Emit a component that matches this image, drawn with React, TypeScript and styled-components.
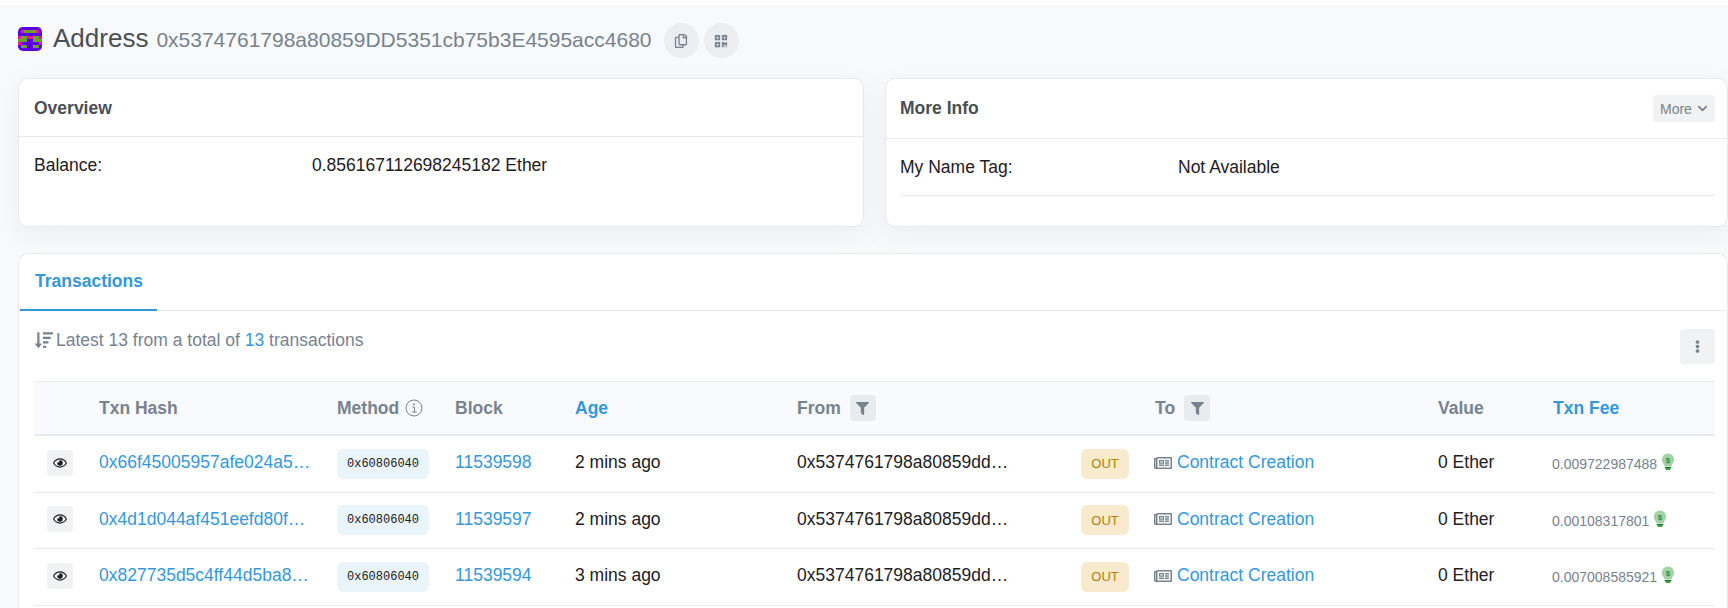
import styled, { createGlobalStyle } from "styled-components";
import {
    FaChevronDown,
    FaEllipsisV,
    FaFilter,
    FaQrcode,
    FaRegCopy,
    FaRegEye,
    FaRegNewspaper,
    FaSortAmountDown,
} from "react-icons/fa";

const grayText = "#77838f";
const darkText = "#1e2022";
const titleText = "#4a4f55";
const highlight = "#3498db";
const border = "#e7eaf3";
const softButton = "#f1f2f4";

const GlobalStyle = createGlobalStyle`
    html, body {
        margin: 0;
        height: 608px;
        overflow: hidden;
        background: #f8f9fa;
        font-family: "Liberation Sans", Arial, sans-serif;
        font-size: 17.5px;
        color: ${darkText};
    }
`;

const Page = styled.div`
    width: 1728px;
    height: 608px;
    overflow: hidden;
    box-sizing: border-box;
    border-top: 5px solid #fdfdfe;
    padding: 0 0 0 18px;
`;

const Header = styled.header`
    display: flex;
    align-items: center;
    box-sizing: border-box;
    height: 63px;
    padding-top: 4px;
    margin-bottom: 10px;
`;

const PageTitle = styled.h1`
    margin: 0 0 0 11px;
    font-size: 26px;
    font-weight: 400;
    color: ${titleText};
`;

const AddressHash = styled.span`
    margin-left: 8px;
    margin-top: 2px;
    font-size: 21px;
    color: ${grayText};
`;

const RoundButton = styled.button<{ $first?: boolean }>`
    display: flex;
    align-items: center;
    justify-content: center;
    width: 35px;
    height: 35px;
    padding: 0;
    margin-top: 4px;
    margin-left: ${(props) => (props.$first ? "12px" : "5px")};
    border: none;
    border-radius: 50%;
    background: #eceef1;
    color: ${grayText};
    font-size: 14px;
`;

const TopGrid = styled.div`
    display: grid;
    grid-template-columns: 846px 843px;
    column-gap: 21px;
    width: 1710px;
`;

const Card = styled.section`
    box-sizing: border-box;
    height: 149px;
    background: #fff;
    border: 1px solid ${border};
    border-radius: 10px;
    box-shadow: 0 8px 24px rgba(140, 152, 164, 0.1);
`;

const CardHeader = styled.div<{ $tall?: boolean }>`
    display: flex;
    align-items: center;
    justify-content: space-between;
    box-sizing: border-box;
    height: ${(props) => (props.$tall ? "60px" : "58px")};
    padding: ${(props) => (props.$tall ? "0 12px 0 14px" : "2px 12px 0 15px")};
    border-bottom: 1px solid ${border};
`;

const CardTitle = styled.h2`
    margin: 0;
    font-size: 17.5px;
    font-weight: 700;
    color: ${titleText};
`;

const MoreButton = styled.button`
    display: flex;
    align-items: center;
    gap: 5px;
    height: 27px;
    width: 62px;
    box-sizing: border-box;
    padding: 0 7px;
    border: none;
    border-radius: 4px;
    background: #f1f2f4;
    color: ${grayText};
    font-family: inherit;
    font-size: 14px;

    svg {
        font-size: 11px;
    }
`;

const InfoRow = styled.div<{ $labelWidth: number; $lined?: boolean }>`
    display: grid;
    grid-template-columns: ${(props) => props.$labelWidth}px 1fr;
    align-items: center;
    margin: ${(props) => (props.$lined ? "0 12px 0 14px" : "0 12px 0 15px")};
    padding: ${(props) => (props.$lined ? "15px 0 15px" : "15px 0")};
    line-height: 26px;
    border-bottom: ${(props) => (props.$lined ? `1px solid ${border}` : "none")};
`;

const TxnCard = styled.section`
    box-sizing: border-box;
    height: 400px;
    margin-top: 26px;
    width: 1710px;
    background: #fff;
    border: 1px solid ${border};
    border-bottom: none;
    border-radius: 10px 10px 0 0;
`;

const Tabs = styled.div`
    height: 57px;
    box-sizing: border-box;
    border-bottom: 1px solid ${border};
    padding-left: 1px;
`;

const Tab = styled.div`
    box-sizing: border-box;
    width: 137px;
    height: 57px;
    padding: 14px 0 0 15px;
    font-weight: 700;
    line-height: 26px;
    color: ${highlight};
    border-bottom: 2px solid ${highlight};
`;

const TxnBody = styled.div`
    padding: 0 12px 0 16px;
`;

const Toolbar = styled.div`
    display: flex;
    justify-content: space-between;
    height: 70px;
    padding-top: 18px;
    box-sizing: border-box;
`;

const Summary = styled.div`
    display: flex;
    align-items: flex-start;
    gap: 3px;
    height: 22px;
    line-height: 22px;
    color: ${grayText};

    svg {
        font-size: 18px;
        margin-top: 2px;
    }
`;

const SummaryLink = styled.span`
    color: ${highlight};
`;

const KebabButton = styled.button`
    display: flex;
    align-items: center;
    justify-content: center;
    width: 35px;
    height: 35px;
    padding: 0;
    border: none;
    border-radius: 4px;
    background: ${softButton};
    color: ${grayText};
    font-size: 13px;
`;

const columns = "64px 238px 118px 120px 222px 284px 74px 283px 115px 161px";

const HeadRow = styled.div`
    display: grid;
    grid-template-columns: ${columns};
    align-items: center;
    box-sizing: border-box;
    height: 55px;
    background: #f8fafd;
    border-top: 1px solid ${border};
    border-bottom: 2px solid ${border};
`;

const HeadCell = styled.div<{ $sorted?: boolean; $wide?: boolean }>`
    display: flex;
    align-items: center;
    gap: ${(props) => (props.$wide ? "9px" : "6px")};
    font-weight: 700;
    color: ${(props) => (props.$sorted ? highlight : grayText)};
`;

const FilterButton = styled.span`
    display: flex;
    align-items: center;
    justify-content: center;
    width: 26px;
    height: 26px;
    border-radius: 4px;
    background: #e9ecef;
    color: ${grayText};
    font-size: 13px;
`;

const Row = styled.div`
    display: grid;
    grid-template-columns: ${columns};
    align-items: center;
    box-sizing: border-box;
    height: 56.5px;
    border-bottom: 1px solid ${border};
`;

const EyeButton = styled.button`
    display: flex;
    align-items: center;
    justify-content: center;
    width: 26px;
    height: 26px;
    padding: 0;
    margin: -2px 0 0 12px;
    border: none;
    border-radius: 4px;
    background: ${softButton};
    color: ${darkText};
    font-size: 14px;
`;

const CellText = styled.div<{ $link?: boolean }>`
    margin-top: -2px;
    white-space: nowrap;
    color: ${(props) => (props.$link ? highlight : darkText)};
`;

const MethodBadge = styled.span`
    display: flex;
    align-items: center;
    justify-content: center;
    box-sizing: border-box;
    width: 92px;
    height: 30px;
    border-radius: 6px;
    background: #e9f4fb;
    font-family: "Liberation Mono", "Courier New", monospace;
    font-size: 12px;
    color: ${darkText};
`;

const OutBadge = styled.span`
    display: flex;
    align-items: center;
    justify-content: center;
    width: 48px;
    height: 30px;
    border-radius: 6px;
    background: #f8ebcd;
    color: #b47d00;
    font-size: 13px;
`;

const ToCell = styled.div`
    display: flex;
    align-items: center;
    gap: 5px;
    margin-top: -2px;
    margin-left: -1px;
    color: ${highlight};
    white-space: nowrap;

    svg {
        color: ${grayText};
        font-size: 18px;
    }
`;

const FeeCell = styled.div`
    display: flex;
    align-items: flex-start;
    gap: 4px;
    margin: 0 0 2px -1px;
    font-size: 14px;
    color: ${grayText};
    white-space: nowrap;
`;

const FeeAmount = styled.span`
    margin-top: 3px;
`;

const Avatar = () => (
    <svg width="24" height="24" viewBox="0 0 8 8" shapeRendering="crispEdges">
        <defs>
            <clipPath id="avatar-clip">
                <rect width="8" height="8" rx="1.6" />
            </clipPath>
        </defs>
        <g clipPath="url(#avatar-clip)">
            <rect width="8" height="8" fill="#5b00e6" />
            <rect x="1" y="1" width="1" height="1" fill="#f0149a" />
            <rect x="2" y="1" width="4" height="1" fill="#6f9f2c" />
            <rect x="6" y="1" width="1" height="1" fill="#f0149a" />
            <rect x="0" y="3" width="1" height="1" fill="#f0149a" />
            <rect x="1" y="3" width="2" height="1" fill="#6f9f2c" />
            <rect x="3" y="3" width="2" height="1" fill="#f0149a" />
            <rect x="5" y="3" width="2" height="1" fill="#6f9f2c" />
            <rect x="7" y="3" width="1" height="1" fill="#f0149a" />
            <rect x="0" y="4" width="3" height="1" fill="#6f9f2c" />
            <rect x="5" y="4" width="3" height="1" fill="#6f9f2c" />
            <rect x="0" y="5" width="1" height="1" fill="#f0149a" />
            <rect x="7" y="5" width="1" height="1" fill="#f0149a" />
            <rect x="1" y="6" width="2" height="1" fill="#6f9f2c" />
            <rect x="5" y="6" width="2" height="1" fill="#6f9f2c" />
        </g>
    </svg>
);

const InfoIcon = () => (
    <svg width="18" height="18" viewBox="0 0 18 18" fill="none" stroke={grayText}>
        <circle cx="9" cy="9" r="8" strokeWidth="1" />
        <path d="M7.3 8h2.2v5M7 13h4.6" strokeWidth="1" />
        <circle cx="9" cy="5.2" r="1" fill={grayText} stroke="none" />
    </svg>
);

const GasBulb = () => (
    <svg width="14" height="18" viewBox="0 0 14 18">
        <path
            d="M7 0.5a6.2 6.2 0 0 1 6.2 6.2c0 2.6-1.9 4-2.7 6.3H3.5C2.7 10.7 0.8 9.3 0.8 6.7A6.2 6.2 0 0 1 7 0.5z"
            fill="#a3d2a4"
        />
        <rect x="3.8" y="13.8" width="6.4" height="1.6" fill="#0a7d1c" />
        <rect x="4.8" y="15.4" width="4.4" height="1.4" fill="#0a7d1c" />
        <text
            x="7"
            y="9.5"
            fontSize="8"
            fontWeight="700"
            textAnchor="middle"
            fill="#2a8a3e"
            fontFamily="Liberation Sans"
        >
            $
        </text>
    </svg>
);

type Txn = {
    hash: string;
    block: string;
    age: string;
    fee: string;
};

const txns: Txn[] = [
    { hash: "0x66f45005957afe024a5…", block: "11539598", age: "2 mins ago", fee: "0.009722987488" },
    { hash: "0x4d1d044af451eefd80f…", block: "11539597", age: "2 mins ago", fee: "0.00108317801" },
    { hash: "0x827735d5c4ff44d5ba8…", block: "11539594", age: "3 mins ago", fee: "0.007008585921" },
];

const App = () => {
    return (
        <>
            <GlobalStyle />
            <Page>
                <Header>
                    <Avatar />
                    <PageTitle>Address</PageTitle>
                    <AddressHash>0x5374761798a80859DD5351cb75b3E4595acc4680</AddressHash>
                    <RoundButton $first>
                        <FaRegCopy />
                    </RoundButton>
                    <RoundButton>
                        <FaQrcode />
                    </RoundButton>
                </Header>
                <TopGrid>
                    <Card>
                        <CardHeader>
                            <CardTitle>Overview</CardTitle>
                        </CardHeader>
                        <InfoRow $labelWidth={278}>
                            <span>Balance:</span>
                            <span>0.856167112698245182 Ether</span>
                        </InfoRow>
                    </Card>
                    <Card>
                        <CardHeader $tall>
                            <CardTitle>More Info</CardTitle>
                            <MoreButton>
                                More <FaChevronDown />
                            </MoreButton>
                        </CardHeader>
                        <InfoRow $labelWidth={278} $lined>
                            <span>My Name Tag:</span>
                            <span>Not Available</span>
                        </InfoRow>
                    </Card>
                </TopGrid>
                <TxnCard>
                    <Tabs>
                        <Tab>Transactions</Tab>
                    </Tabs>
                    <TxnBody>
                        <Toolbar>
                            <Summary>
                                <FaSortAmountDown />
                                <span>
                                    Latest 13 from a total of <SummaryLink>13</SummaryLink> transactions
                                </span>
                            </Summary>
                            <KebabButton>
                                <FaEllipsisV />
                            </KebabButton>
                        </Toolbar>
                        <HeadRow>
                            <span />
                            <HeadCell>Txn Hash</HeadCell>
                            <HeadCell>
                                Method <InfoIcon />
                            </HeadCell>
                            <HeadCell>Block</HeadCell>
                            <HeadCell $sorted>Age</HeadCell>
                            <HeadCell $wide>
                                From
                                <FilterButton>
                                    <FaFilter />
                                </FilterButton>
                            </HeadCell>
                            <span />
                            <HeadCell $wide>
                                To
                                <FilterButton>
                                    <FaFilter />
                                </FilterButton>
                            </HeadCell>
                            <HeadCell>Value</HeadCell>
                            <HeadCell $sorted>Txn Fee</HeadCell>
                        </HeadRow>
                        {txns.map((txn) => (
                            <Row key={txn.hash}>
                                <EyeButton>
                                    <FaRegEye />
                                </EyeButton>
                                <CellText $link>{txn.hash}</CellText>
                                <MethodBadge>0x60806040</MethodBadge>
                                <CellText $link>{txn.block}</CellText>
                                <CellText>{txn.age}</CellText>
                                <CellText>0x5374761798a80859dd…</CellText>
                                <OutBadge>OUT</OutBadge>
                                <ToCell>
                                    <FaRegNewspaper />
                                    Contract Creation
                                </ToCell>
                                <CellText>0 Ether</CellText>
                                <FeeCell>
                                    <FeeAmount>{txn.fee}</FeeAmount>
                                    <GasBulb />
                                </FeeCell>
                            </Row>
                        ))}
                    </TxnBody>
                </TxnCard>
            </Page>
        </>
    );
};

export default App;
